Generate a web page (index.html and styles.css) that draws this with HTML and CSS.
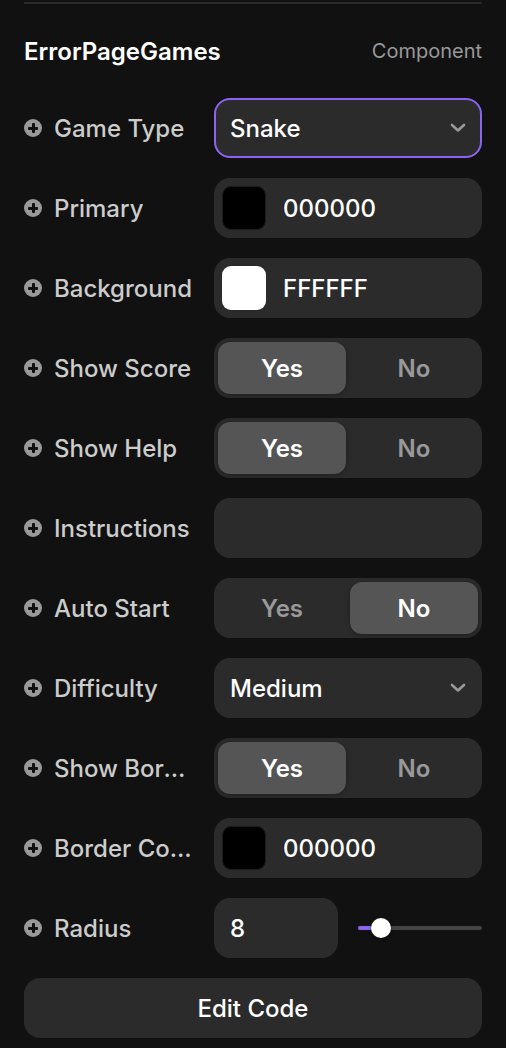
FILE: index.html
```html
<!DOCTYPE html>
<html lang="en">
<head>
  <meta charset="UTF-8" />
  <meta name="viewport" content="width=device-width, initial-scale=1.0" />
  <title>ErrorPageGames</title>
  <link rel="stylesheet" href="styles.css">
</head>
<body>
  <div class="panel">
    <div class="divider"></div>

    <div class="header">
      <span class="title">ErrorPageGames</span>
      <span class="kind">Component</span>
    </div>

    <div class="rows">
      <div class="row">
        <div class="label"><span class="plus"></span><span class="name">Game Type</span></div>
        <div class="control select focused">
          <span>Snake</span>
          <svg class="chevron" width="16" height="10" viewBox="0 0 16 10"><path d="M2 2l6 5.5L14 2" fill="none" stroke="#999" stroke-width="2.6" stroke-linecap="round" stroke-linejoin="round"/></svg>
        </div>
      </div>

      <div class="row">
        <div class="label"><span class="plus"></span><span class="name">Primary</span></div>
        <div class="control color">
          <span class="swatch black"></span>
          <span>000000</span>
        </div>
      </div>

      <div class="row">
        <div class="label"><span class="plus"></span><span class="name">Background</span></div>
        <div class="control color">
          <span class="swatch white"></span>
          <span>FFFFFF</span>
        </div>
      </div>

      <div class="row">
        <div class="label"><span class="plus"></span><span class="name">Show Score</span></div>
        <div class="control segmented">
          <span class="seg active">Yes</span>
          <span class="seg">No</span>
        </div>
      </div>

      <div class="row">
        <div class="label"><span class="plus"></span><span class="name">Show Help</span></div>
        <div class="control segmented">
          <span class="seg active">Yes</span>
          <span class="seg">No</span>
        </div>
      </div>

      <div class="row">
        <div class="label"><span class="plus"></span><span class="name">Instructions</span></div>
        <div class="control"></div>
      </div>

      <div class="row">
        <div class="label"><span class="plus"></span><span class="name">Auto Start</span></div>
        <div class="control segmented">
          <span class="seg">Yes</span>
          <span class="seg active">No</span>
        </div>
      </div>

      <div class="row">
        <div class="label"><span class="plus"></span><span class="name">Difficulty</span></div>
        <div class="control select">
          <span>Medium</span>
          <svg class="chevron" width="16" height="10" viewBox="0 0 16 10"><path d="M2 2l6 5.5L14 2" fill="none" stroke="#999" stroke-width="2.6" stroke-linecap="round" stroke-linejoin="round"/></svg>
        </div>
      </div>

      <div class="row">
        <div class="label"><span class="plus"></span><span class="name">Show Border</span></div>
        <div class="control segmented">
          <span class="seg active">Yes</span>
          <span class="seg">No</span>
        </div>
      </div>

      <div class="row">
        <div class="label"><span class="plus"></span><span class="name">Border Color</span></div>
        <div class="control color">
          <span class="swatch black"></span>
          <span>000000</span>
        </div>
      </div>

      <div class="row">
        <div class="label"><span class="plus"></span><span class="name">Radius</span></div>
        <div class="number-slider">
          <div class="control number">8</div>
          <div class="slider">
            <div class="track"></div>
            <div class="fill" style="width: 14px;"></div>
            <div class="thumb" style="left: 13px;"></div>
          </div>
        </div>
      </div>

      <button class="edit-btn">Edit Code</button>
    </div>
  </div>
</body>
</html>
```

FILE: styles.css
```css
body {
  margin: 0;
  background-color: #111;
  font-family: Inter, "Noto Sans", sans-serif;
  color: white;
}

.panel {
  padding: 0 24px;
  height: 1048px;
  box-sizing: border-box;
}

.divider {
  height: 2px;
  margin-top: 2px;
  background-color: #2a2a2a;
}

.header {
  height: 94px;
  display: flex;
  align-items: center;
  justify-content: space-between;
}

.title {
  font-size: 24px;
  font-weight: 600;
}

.kind {
  font-size: 20px;
  color: #999;
}

.rows {
  display: flex;
  flex-direction: column;
  gap: 20px;
}

.row {
  height: 60px;
  display: grid;
  grid-template-columns: 170px 1fr;
  column-gap: 20px;
  align-items: center;
}

.label {
  display: flex;
  align-items: center;
  gap: 12px;
  min-width: 0;
}

.plus {
  flex: none;
  position: relative;
  width: 18px;
  height: 18px;
  border-radius: 50%;
  background-color: #999;
}

.plus::before,
.plus::after {
  content: "";
  position: absolute;
  background-color: #111;
  border-radius: 1px;
}

.plus::before {
  left: 4px;
  top: 7.5px;
  width: 10px;
  height: 3px;
}

.plus::after {
  left: 7.5px;
  top: 4px;
  width: 3px;
  height: 10px;
}

/* long labels are cut with an ellipsis, as in the panel */
.name {
  font-size: 24px;
  font-weight: 500;
  color: #ccc;
  white-space: nowrap;
  overflow: hidden;
  text-overflow: ellipsis;
}

.control {
  height: 60px;
  box-sizing: border-box;
  background-color: #2b2b2b;
  border-radius: 16px;
  font-size: 24px;
  font-weight: 500;
  display: flex;
  align-items: center;
}

.select {
  justify-content: space-between;
  padding: 0 16px;
}

.select.focused {
  border: 2px solid #8d63f2;
  padding: 0 14px;
}

.color {
  padding: 0 8px;
  gap: 17px;
}

.swatch {
  width: 44px;
  height: 44px;
  border-radius: 9px;
  box-sizing: border-box;
}

.swatch.black {
  background-color: #000;
  border: 1px solid #1d1d1d;
}

.swatch.white {
  background-color: #fff;
}

.segmented {
  padding: 4px;
  display: grid;
  grid-template-columns: 1fr 1fr;
  column-gap: 4px;
}

.seg {
  height: 52px;
  display: flex;
  align-items: center;
  justify-content: center;
  border-radius: 12px;
  color: #999;
  font-weight: 600;
}

.seg.active {
  background-color: #555;
  color: white;
  box-shadow: 0 1px 4px rgba(0, 0, 0, 0.3);
}

.number-slider {
  display: grid;
  grid-template-columns: 124px 1fr;
  column-gap: 20px;
  align-items: center;
}

.number {
  padding: 0 16px;
}

.slider {
  position: relative;
  height: 24px;
}

.track {
  position: absolute;
  left: 0;
  right: 0;
  top: 10px;
  height: 4px;
  border-radius: 2px;
  background-color: #444;
}

.fill {
  position: absolute;
  left: 0;
  top: 10px;
  height: 4px;
  border-radius: 2px;
  background-color: #8d63f2;
}

.thumb {
  position: absolute;
  top: 2px;
  width: 20px;
  height: 20px;
  border-radius: 50%;
  background-color: white;
  box-shadow: 0 1px 3px rgba(0, 0, 0, 0.4);
}

.edit-btn {
  height: 60px;
  width: 100%;
  border: none;
  border-radius: 16px;
  background-color: #2b2b2b;
  color: white;
  font-family: Inter, "Noto Sans", sans-serif;
  font-size: 24px;
  font-weight: 500;
}
```
